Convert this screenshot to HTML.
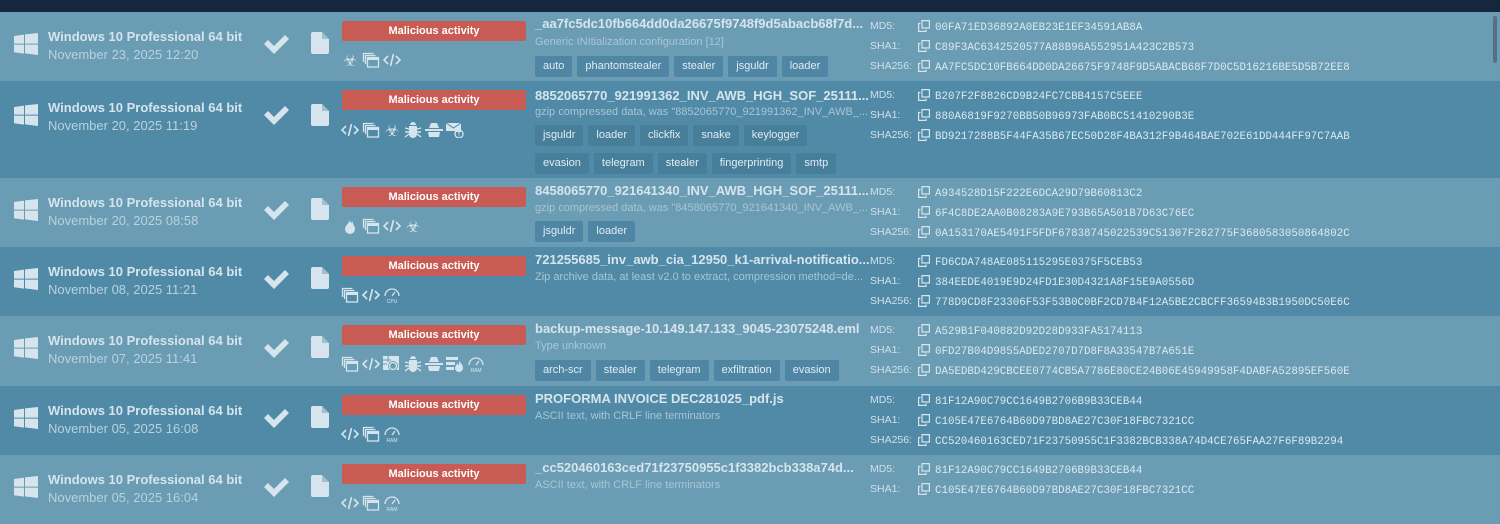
<!DOCTYPE html>
<html><head><meta charset="utf-8"><style>
*{margin:0;padding:0;box-sizing:border-box}
body{width:1500px;height:500px;overflow:hidden;background:#6a9cb3;font-family:"Liberation Sans",sans-serif;position:relative}
.top{position:absolute;left:0;top:0;width:1500px;height:12px;background:#14273d}
.row{position:absolute;left:0;width:1500px}
.l{background:#6a9cb3}.d{background:#508aa6}
.win{position:absolute;left:14px;width:24px;height:22px}
.os{position:absolute;left:48px;font-size:13px;font-weight:bold;color:#d6e5ed}
.dt{position:absolute;left:48px;font-size:13px;color:#b9d2de}
.chk{position:absolute;left:263px;width:27px;height:22px}
.file{position:absolute;left:311px;width:18px;height:22px}
.badge{position:absolute;left:342px;width:184px;height:20px;background:#c95b55;border-radius:2px;color:#fff;font-size:11px;font-weight:bold;text-align:center;line-height:20px}
.ic{position:absolute;left:341px;height:16px;display:flex;gap:3px;color:#d6e5ed}
.ic svg{width:18px;height:16px}
.tt{position:absolute;left:535px;font-size:13px;font-weight:bold;color:#d6e5ed;white-space:nowrap}
.st{position:absolute;left:535px;font-size:11px;color:#a8c6d5;white-space:nowrap}
.tags{position:absolute;left:535px;width:330px;display:flex;flex-wrap:wrap;gap:7px 5px}
.tag{height:21px;line-height:21px;padding:0 8px;font-size:11px;color:#e0ecf2;border-radius:2px}
.l .tag{background:#4f86a3}.d .tag{background:#477f9b}
.hl{position:absolute;left:870px;font-size:10.5px;color:#cfe0e9}
.hv{position:absolute;left:918px;font-family:"Liberation Mono",monospace;font-size:10.8px;color:#dce9f0;white-space:nowrap}
.hv svg{width:12px;height:12px;vertical-align:-2px;margin-right:5px}
.sb{position:absolute;left:1493px;top:16px;width:4px;height:47px;background:#566f86;border-radius:2px}
</style></head><body>
<div class="top"></div>

<svg width="0" height="0" style="position:absolute">
<defs>
<symbol id="cp" viewBox="0 0 12 12"><path fill="none" stroke="#d6e5ed" stroke-width="1.2" d="M4 .6h7.4V8H4zM2.5 3.5H.6v7.9H8V9.5"/></symbol>
<symbol id="win" viewBox="0 0 24 22"><path fill="#d6e5ed" d="M0 3l10-1.4v9H0zM11 1.4L24 0v10.6H11zM0 11.6h10v9L0 19.2zM11 11.6h13V22l-13-1.6z"/></symbol>
<symbol id="chk" viewBox="0 0 27 22"><path fill="#d6e5ed" d="M1 11l4-4 6 6L22 2l4 4L11 21z"/></symbol>
<symbol id="file" viewBox="0 0 18 22"><path fill="#d6e5ed" d="M2 0h9l7 7v13a2 2 0 0 1-2 2H2a2 2 0 0 1-2-2V2a2 2 0 0 1 2-2z"/><path fill="#6a9cb3" opacity=".5" d="M11 0v7h7z"/></symbol>
<symbol id="code" viewBox="0 0 18 16"><path fill="none" stroke="#d6e5ed" stroke-width="1.6" d="M5 4L1 8l4 4M13 4l4 4-4 4M10.5 2L7.5 14"/></symbol>
<symbol id="wins" viewBox="0 0 18 16"><path fill="none" stroke="#d6e5ed" stroke-width="1.3" d="M1.5 10V1.5h10M3.5 12V3.5h10"/><rect x="5.5" y="5.5" width="11" height="9.5" fill="none" stroke="#d6e5ed" stroke-width="1.3"/><rect x="5.5" y="5.5" width="11" height="2.5" fill="#d6e5ed"/></symbol>
<symbol id="bio" viewBox="0 0 18 16"><text x="9" y="14" font-size="16" text-anchor="middle" fill="#d6e5ed" font-family="DejaVu Sans">☣</text></symbol>
<symbol id="bug" viewBox="0 0 18 16"><path fill="#d6e5ed" d="M6 3a3 3 0 0 1 6 0zM5 4h8v8a4 4 0 0 1-8 0z"/><path stroke="#d6e5ed" stroke-width="1.4" d="M1 6l4 1M17 6l-4 1M1 10h4M17 10h-4M1 15l4-3M17 15l-4-3"/></symbol>
<symbol id="spy" viewBox="0 0 18 16"><path fill="#d6e5ed" d="M4 6l2-5h6l2 5zM0 7h18v2H0zM3 10h12l-1 5H4z"/></symbol>
<symbol id="mail" viewBox="0 0 18 16"><path fill="#d6e5ed" d="M0 1h15v9H9v-1H0z"/><path fill="none" stroke="#508aa6" stroke-width="1" d="M0 1l7.5 5L15 1"/><circle cx="13" cy="12" r="4" fill="none" stroke="#d6e5ed" stroke-width="1.3"/><path stroke="#d6e5ed" d="M13 10v2.5M13 13.5v1"/></symbol>
<symbol id="drop" viewBox="0 0 18 16"><path fill="#d6e5ed" d="M9 1c0 4-5 6-5 10a5 5 0 0 0 10 0c0-3-3-5-2-8-1 2-3 3-3-2z"/></symbol>
<symbol id="cpu" viewBox="0 0 18 16"><path fill="none" stroke="#d6e5ed" stroke-width="1.3" d="M2 9a7 7 0 0 1 14 0M9 9l3-4"/><text x="9" y="16" font-size="5" text-anchor="middle" fill="#d6e5ed" font-family="Liberation Sans">CPU</text></symbol>
<symbol id="ram" viewBox="0 0 18 16"><path fill="none" stroke="#d6e5ed" stroke-width="1.3" d="M2 9a7 7 0 0 1 14 0M9 9l3-4"/><text x="9" y="16" font-size="5" text-anchor="middle" fill="#d6e5ed" font-family="Liberation Sans">RAM</text></symbol>
<symbol id="net" viewBox="0 0 18 16"><path fill="#d6e5ed" d="M0 0h16v14H0z"/><circle cx="10" cy="10" r="5" fill="#6a9cb3"/><circle cx="10" cy="10" r="3.5" fill="none" stroke="#d6e5ed" stroke-width="1.3"/><path stroke="#6a9cb3" d="M0 4h8M0 8h4M5 0v6"/></symbol>
<symbol id="fire" viewBox="0 0 18 16"><path fill="#d6e5ed" d="M0 1h12v3H0zM0 6h9v3H0zM0 11h8v3H0z"/><path fill="#d6e5ed" d="M13 5c3 3 4 5 4 7a4 4 0 0 1-8 0c0-2 2-3 2-5 1 1 1 2 2 2z"/></symbol>
</defs></svg>

<!-- Row 1 -->
<div class="row l" style="top:12px;height:69px">
<svg class="win" style="top:21px"><use href="#win"/></svg>
<div class="os" style="top:17px">Windows 10 Professional 64 bit</div>
<div class="dt" style="top:35px">November 23, 2025 12:20</div>
<svg class="chk" style="top:21px"><use href="#chk"/></svg>
<svg class="file" style="top:20px"><use href="#file"/></svg>
<div class="badge" style="top:9px">Malicious activity</div>
<div class="ic" style="top:40px"><svg><use href="#bio"/></svg><svg><use href="#wins"/></svg><svg><use href="#code"/></svg></div>
<div class="tt" style="top:4px">_aa7fc5dc10fb664dd0da26675f9748f9d5abacb68f7d...</div>
<div class="st" style="top:24px">Generic INItialization configuration [12]</div>
<div class="tags" style="top:44px"><span class="tag">auto</span><span class="tag">phantomstealer</span><span class="tag">stealer</span><span class="tag">jsguldr</span><span class="tag">loader</span></div>
<div class="hl" style="top:8px">MD5:</div><div class="hv" style="top:8px"><svg><use href="#cp"/></svg>00FA71ED36892A0EB23E1EF34591AB8A</div>
<div class="hl" style="top:28px">SHA1:</div><div class="hv" style="top:28px"><svg><use href="#cp"/></svg>C89F3AC6342520577A88B96A552951A423C2B573</div>
<div class="hl" style="top:48px">SHA256:</div><div class="hv" style="top:48px"><svg><use href="#cp"/></svg>AA7FC5DC10FB664DD0DA26675F9748F9D5ABACB68F7D0C5D16216BE5D5B72EE8</div>
</div>

<!-- Row 2 -->
<div class="row d" style="top:81px;height:97px">
<svg class="win" style="top:23px"><use href="#win"/></svg>
<div class="os" style="top:19px">Windows 10 Professional 64 bit</div>
<div class="dt" style="top:37px">November 20, 2025 11:19</div>
<svg class="chk" style="top:23px"><use href="#chk"/></svg>
<svg class="file" style="top:23px"><use href="#file"/></svg>
<div class="badge" style="top:9px">Malicious activity</div>
<div class="ic" style="top:41px"><svg><use href="#code"/></svg><svg><use href="#wins"/></svg><svg><use href="#bio"/></svg><svg><use href="#bug"/></svg><svg><use href="#spy"/></svg><svg><use href="#mail"/></svg></div>
<div class="tt" style="top:7px">8852065770_921991362_INV_AWB_HGH_SOF_25111...</div>
<div class="st" style="top:25px">gzip compressed data, was "8852065770_921991362_INV_AWB_...</div>
<div class="tags" style="top:44px"><span class="tag">jsguldr</span><span class="tag">loader</span><span class="tag">clickfix</span><span class="tag">snake</span><span class="tag">keylogger</span><span class="tag">evasion</span><span class="tag">telegram</span><span class="tag">stealer</span><span class="tag">fingerprinting</span><span class="tag">smtp</span></div>
<div class="hl" style="top:8px">MD5:</div><div class="hv" style="top:8px"><svg><use href="#cp"/></svg>B207F2F8826CD9B24FC7CBB4157C5EEE</div>
<div class="hl" style="top:28px">SHA1:</div><div class="hv" style="top:28px"><svg><use href="#cp"/></svg>880A6819F9270BB50B96973FAB0BC51410290B3E</div>
<div class="hl" style="top:48px">SHA256:</div><div class="hv" style="top:48px"><svg><use href="#cp"/></svg>BD9217288B5F44FA35B67EC50D28F4BA312F9B464BAE702E61DD444FF97C7AAB</div>
</div>

<!-- Row 3 -->
<div class="row l" style="top:178px;height:69px">
<svg class="win" style="top:21px"><use href="#win"/></svg>
<div class="os" style="top:17px">Windows 10 Professional 64 bit</div>
<div class="dt" style="top:35px">November 20, 2025 08:58</div>
<svg class="chk" style="top:21px"><use href="#chk"/></svg>
<svg class="file" style="top:20px"><use href="#file"/></svg>
<div class="badge" style="top:9px">Malicious activity</div>
<div class="ic" style="top:40px"><svg><use href="#drop"/></svg><svg><use href="#wins"/></svg><svg><use href="#code"/></svg><svg><use href="#bio"/></svg></div>
<div class="tt" style="top:5px">8458065770_921641340_INV_AWB_HGH_SOF_25111...</div>
<div class="st" style="top:24px">gzip compressed data, was "8458065770_921641340_INV_AWB_...</div>
<div class="tags" style="top:43px"><span class="tag">jsguldr</span><span class="tag">loader</span></div>
<div class="hl" style="top:8px">MD5:</div><div class="hv" style="top:8px"><svg><use href="#cp"/></svg>A934528D15F222E6DCA29D79B60813C2</div>
<div class="hl" style="top:28px">SHA1:</div><div class="hv" style="top:28px"><svg><use href="#cp"/></svg>6F4C8DE2AA0B08283A9E793B65A501B7D63C76EC</div>
<div class="hl" style="top:48px">SHA256:</div><div class="hv" style="top:48px"><svg><use href="#cp"/></svg>0A153170AE5491F5FDF67838745022539C51307F262775F3680583050864802C</div>
</div>

<!-- Row 4 -->
<div class="row d" style="top:247px;height:69px">
<svg class="win" style="top:21px"><use href="#win"/></svg>
<div class="os" style="top:17px">Windows 10 Professional 64 bit</div>
<div class="dt" style="top:35px">November 08, 2025 11:21</div>
<svg class="chk" style="top:21px"><use href="#chk"/></svg>
<svg class="file" style="top:20px"><use href="#file"/></svg>
<div class="badge" style="top:9px">Malicious activity</div>
<div class="ic" style="top:40px"><svg><use href="#wins"/></svg><svg><use href="#code"/></svg><svg><use href="#cpu"/></svg></div>
<div class="tt" style="top:5px">721255685_inv_awb_cia_12950_k1-arrival-notificatio...</div>
<div class="st" style="top:24px">Zip archive data, at least v2.0 to extract, compression method=de...</div>
<div class="hl" style="top:8px">MD5:</div><div class="hv" style="top:8px"><svg><use href="#cp"/></svg>FD6CDA748AE085115295E0375F5CEB53</div>
<div class="hl" style="top:28px">SHA1:</div><div class="hv" style="top:28px"><svg><use href="#cp"/></svg>384EEDE4019E9D24FD1E30D4321A8F15E9A0556D</div>
<div class="hl" style="top:48px">SHA256:</div><div class="hv" style="top:48px"><svg><use href="#cp"/></svg>778D9CD8F23306F53F53B0C0BF2CD7B4F12A5BE2CBCFF36594B3B1950DC50E6C</div>
</div>

<!-- Row 5 -->
<div class="row l" style="top:316px;height:70px">
<svg class="win" style="top:21px"><use href="#win"/></svg>
<div class="os" style="top:17px">Windows 10 Professional 64 bit</div>
<div class="dt" style="top:35px">November 07, 2025 11:41</div>
<svg class="chk" style="top:21px"><use href="#chk"/></svg>
<svg class="file" style="top:20px"><use href="#file"/></svg>
<div class="badge" style="top:9px">Malicious activity</div>
<div class="ic" style="top:40px"><svg><use href="#wins"/></svg><svg><use href="#code"/></svg><svg><use href="#net"/></svg><svg><use href="#bug"/></svg><svg><use href="#spy"/></svg><svg><use href="#fire"/></svg><svg><use href="#ram"/></svg></div>
<div class="tt" style="top:5px">backup-message-10.149.147.133_9045-23075248.eml</div>
<div class="st" style="top:24px">Type unknown</div>
<div class="tags" style="top:44px"><span class="tag">arch-scr</span><span class="tag">stealer</span><span class="tag">telegram</span><span class="tag">exfiltration</span><span class="tag">evasion</span></div>
<div class="hl" style="top:8px">MD5:</div><div class="hv" style="top:8px"><svg><use href="#cp"/></svg>A529B1F040882D92D28D933FA5174113</div>
<div class="hl" style="top:28px">SHA1:</div><div class="hv" style="top:28px"><svg><use href="#cp"/></svg>0FD27B04D9855ADED2707D7D8F8A33547B7A651E</div>
<div class="hl" style="top:48px">SHA256:</div><div class="hv" style="top:48px"><svg><use href="#cp"/></svg>DA5EDBD429CBCEE0774CB5A7786E80CE24B06E45949958F4DABFA52895EF560E</div>
</div>

<!-- Row 6 -->
<div class="row d" style="top:386px;height:69px">
<svg class="win" style="top:21px"><use href="#win"/></svg>
<div class="os" style="top:17px">Windows 10 Professional 64 bit</div>
<div class="dt" style="top:35px">November 05, 2025 16:08</div>
<svg class="chk" style="top:21px"><use href="#chk"/></svg>
<svg class="file" style="top:20px"><use href="#file"/></svg>
<div class="badge" style="top:9px">Malicious activity</div>
<div class="ic" style="top:40px"><svg><use href="#code"/></svg><svg><use href="#wins"/></svg><svg><use href="#ram"/></svg></div>
<div class="tt" style="top:5px">PROFORMA INVOICE DEC281025_pdf.js</div>
<div class="st" style="top:24px">ASCII text, with CRLF line terminators</div>
<div class="hl" style="top:8px">MD5:</div><div class="hv" style="top:8px"><svg><use href="#cp"/></svg>81F12A90C79CC1649B2706B9B33CEB44</div>
<div class="hl" style="top:28px">SHA1:</div><div class="hv" style="top:28px"><svg><use href="#cp"/></svg>C105E47E6764B60D97BD8AE27C30F18FBC7321CC</div>
<div class="hl" style="top:48px">SHA256:</div><div class="hv" style="top:48px"><svg><use href="#cp"/></svg>CC520460163CED71F23750955C1F3382BCB338A74D4CE765FAA27F6F89B2294</div>
</div>

<!-- Row 7 -->
<div class="row l" style="top:455px;height:69px">
<svg class="win" style="top:21px"><use href="#win"/></svg>
<div class="os" style="top:17px">Windows 10 Professional 64 bit</div>
<div class="dt" style="top:35px">November 05, 2025 16:04</div>
<svg class="chk" style="top:21px"><use href="#chk"/></svg>
<svg class="file" style="top:20px"><use href="#file"/></svg>
<div class="badge" style="top:9px">Malicious activity</div>
<div class="ic" style="top:40px"><svg><use href="#code"/></svg><svg><use href="#wins"/></svg><svg><use href="#ram"/></svg></div>
<div class="tt" style="top:5px">_cc520460163ced71f23750955c1f3382bcb338a74d...</div>
<div class="st" style="top:24px">ASCII text, with CRLF line terminators</div>
<div class="hl" style="top:8px">MD5:</div><div class="hv" style="top:8px"><svg><use href="#cp"/></svg>81F12A90C79CC1649B2706B9B33CEB44</div>
<div class="hl" style="top:28px">SHA1:</div><div class="hv" style="top:28px"><svg><use href="#cp"/></svg>C105E47E6764B60D97BD8AE27C30F18FBC7321CC</div>
</div>

<div class="sb"></div>
</body></html>
